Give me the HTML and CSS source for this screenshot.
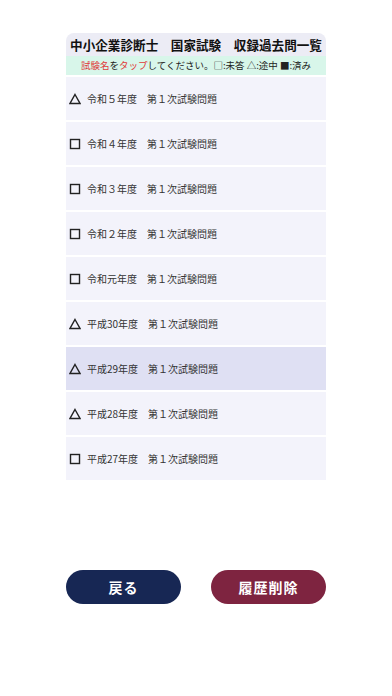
FILE: index.html
```html
<!DOCTYPE html>
<html lang="ja">
<head>
    <meta charset="UTF-8">
    <meta name="viewport" content="width=device-width, initial-scale=1.0">
    <title>収録過去問一覧</title>
    <link rel="stylesheet" href="styles.css">
</head>
<body>
    <div id="page">
        <div class="head">
            <h1>中小企業診断士　国家試験　収録過去問一覧</h1>
            <p class="guide"><em>試験名</em>を<em>タップ</em>してください。□:未答 △:途中 ■:済み</p>
        </div>
        <ul class="list">
            <li><svg class="mark" viewBox="0 0 12 12"><path d="M6 1.5 L11 10.5 H1 Z"/></svg>令和５年度　第１次試験問題</li>
            <li><svg class="mark" viewBox="0 0 12 12"><rect x="1.5" y="1.5" width="9" height="9"/></svg>令和４年度　第１次試験問題</li>
            <li><svg class="mark" viewBox="0 0 12 12"><rect x="1.5" y="1.5" width="9" height="9"/></svg>令和３年度　第１次試験問題</li>
            <li><svg class="mark" viewBox="0 0 12 12"><rect x="1.5" y="1.5" width="9" height="9"/></svg>令和２年度　第１次試験問題</li>
            <li><svg class="mark" viewBox="0 0 12 12"><rect x="1.5" y="1.5" width="9" height="9"/></svg>令和元年度　第１次試験問題</li>
            <li><svg class="mark" viewBox="0 0 12 12"><path d="M6 1.5 L11 10.5 H1 Z"/></svg>平成30年度　第１次試験問題</li>
            <li class="on"><svg class="mark" viewBox="0 0 12 12"><path d="M6 1.5 L11 10.5 H1 Z"/></svg>平成29年度　第１次試験問題</li>
            <li><svg class="mark" viewBox="0 0 12 12"><path d="M6 1.5 L11 10.5 H1 Z"/></svg>平成28年度　第１次試験問題</li>
            <li><svg class="mark" viewBox="0 0 12 12"><rect x="1.5" y="1.5" width="9" height="9"/></svg>平成27年度　第１次試験問題</li>
        </ul>
        <div class="btns">
            <button class="back">戻る</button>
            <button class="del">履歴削除</button>
        </div>
    </div>
</body>
</html>
```

FILE: styles.css
```css
* {
    margin: 0;
    padding: 0;
    box-sizing: border-box;
}
li {
    list-style: none;
}
body {
    background: #fff;
    font-family: "Noto Sans CJK JP", "Noto Sans", sans-serif;
    color: #222;
}
#page {
    width: 260px;
    margin: 33px auto 0;
}
.head {
    background: #ececf5;
    border-radius: 8px 8px 0 0;
    overflow: hidden;
}
.head h1 {
    height: 23px;
    line-height: 23px;
    font-size: 12.6px;
    font-weight: bold;
    text-align: center;
    white-space: nowrap;
    color: #111;
}
.head .guide {
    height: 19px;
    line-height: 19px;
    background: #d8f6ea;
    font-size: 9.5px;
    text-align: center;
    white-space: nowrap;
    color: #222;
}
.head .guide em {
    font-style: normal;
    color: #e03a3a;
}
.list {
    display: flex;
    flex-direction: column;
    gap: 2px;
    margin-top: 2px;
}
.list li {
    height: 43px;
    display: flex;
    align-items: center;
    padding-left: 3px;
    background: #f3f3fb;
    font-size: 10px;
    color: #333;
    white-space: nowrap;
}
.list li.on {
    background: #dfe0f3;
}
.list .mark {
    width: 12px;
    height: 12px;
    margin-right: 6px;
    fill: none;
    stroke: #222;
    stroke-width: 1.4;
}
.btns {
    display: flex;
    justify-content: space-between;
    margin-top: 90px;
}
.btns button {
    width: 115px;
    height: 34px;
    border: 0;
    outline: 0;
    border-radius: 17px;
    color: #fff;
    font-family: inherit;
    font-size: 14px;
    font-weight: bold;
    letter-spacing: 1px;
}
.btns .back {
    background: #172754;
}
.btns .del {
    background: #7e2440;
}
```
